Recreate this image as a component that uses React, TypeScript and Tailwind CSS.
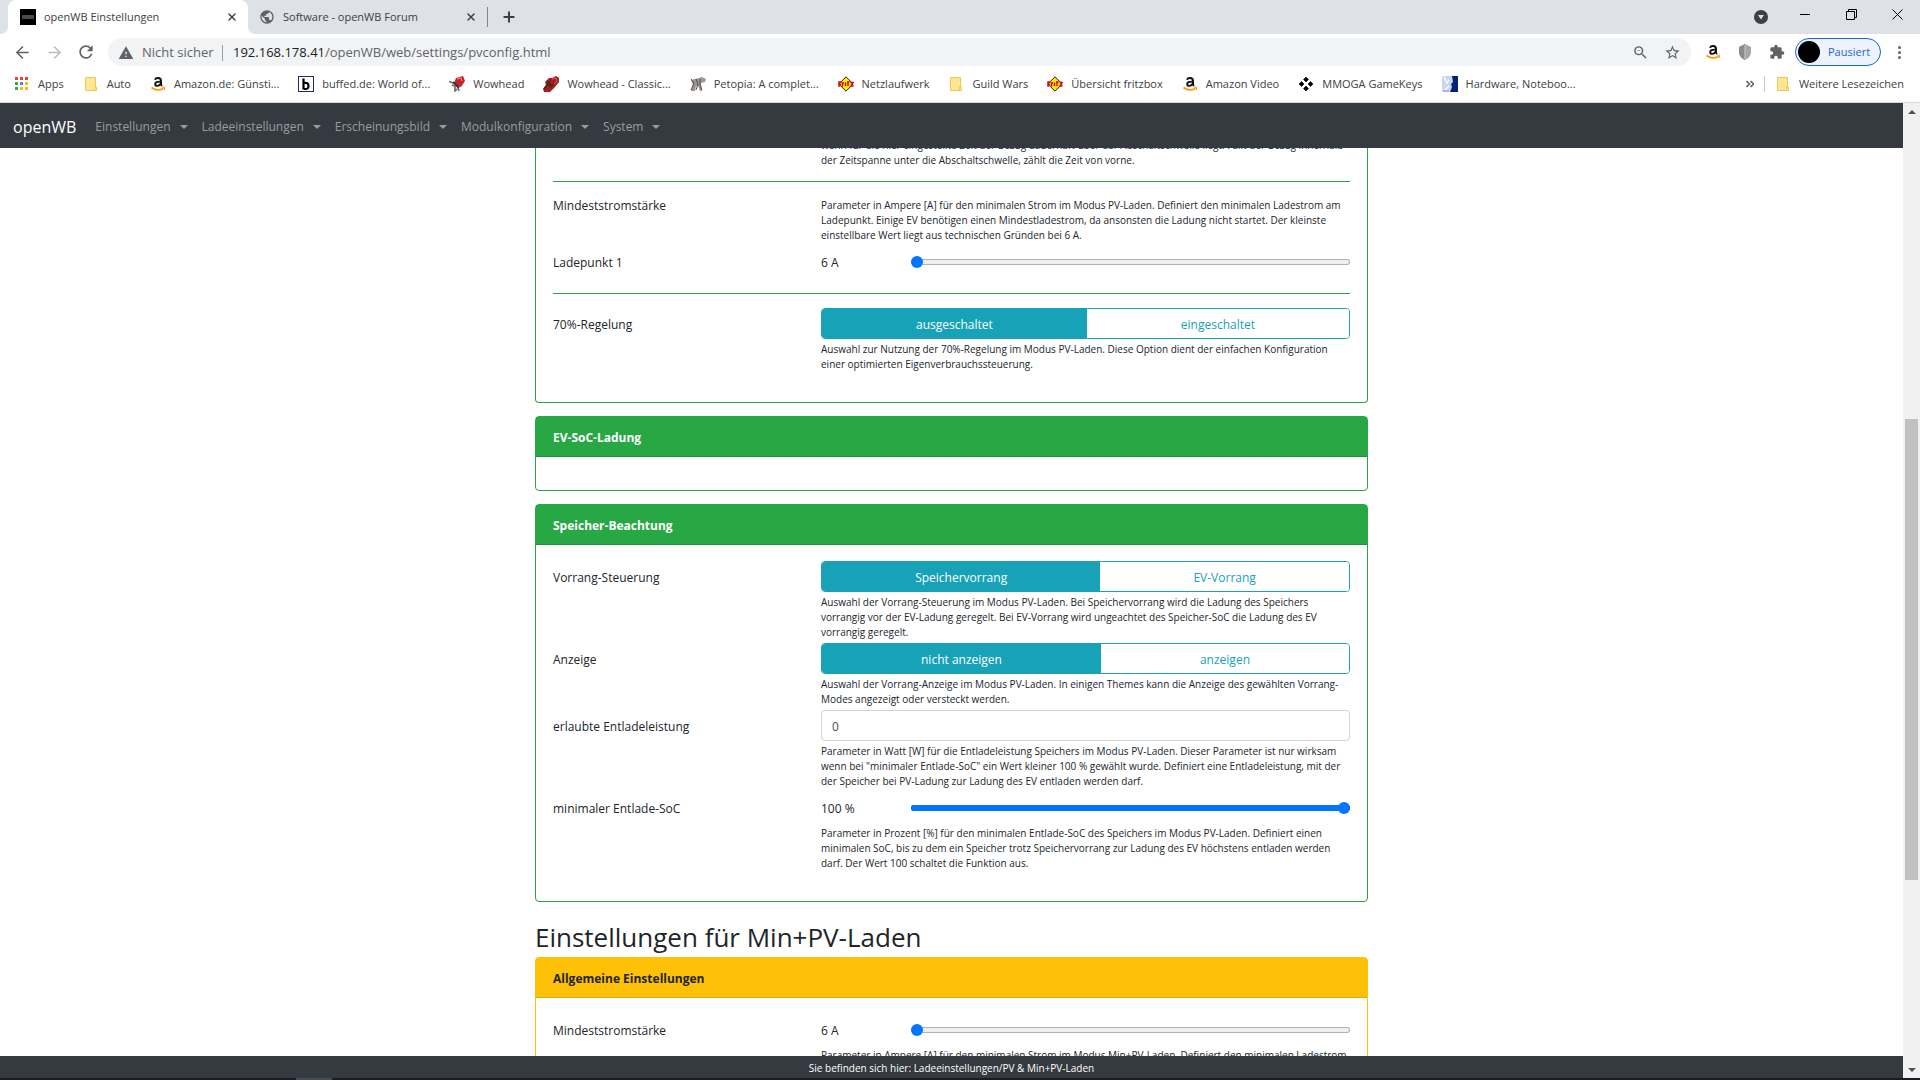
import { useState } from 'react'
import type { ReactNode } from 'react'
import { ArrowLeft, ArrowRight, Plus, X } from 'lucide-react'
import { MdExtension, MdPublic, MdRefresh, MdStarBorder, MdWarning, MdZoomOut } from 'react-icons/md'

function FolderIcon() {
  return (
    <svg width="16" height="16" viewBox="0 0 16 16">
      <path d="M2.5 1.5h10v9.500h1v3.500h-11z" fill="#ffe694" stroke="#ecc94e" />
      <path d="M11.500 14.500v-3.500h1" fill="none" stroke="#ecc94e" />
    </svg>
  )
}

function AppsIcon() {
  const colors = ['#ea4335', '#ea4335', '#ea4335', '#34a853', '#4285f4', '#fbbc04', '#34a853', '#fbbc04', '#fbbc04']
  return (
    <svg width="16" height="16" viewBox="0 0 16 16">
      {colors.map((c, i) => (
        <rect key={i} x={1 + (i % 3) * 5} y={1 + Math.floor(i / 3) * 5} width="3" height="3" fill={c} />
      ))}
    </svg>
  )
}

function AmazonIcon() {
  return (
    <svg width="16" height="16" viewBox="0 0 16 16">
      <path d="M5 3.800Q5.600 2 8 2q3 0 3 2.800v3.200q0 1 .9 2" fill="none" stroke="#111" strokeWidth="2" />
      <path d="M10.500 5.600Q5.200 5.400 5.200 8q0 1.900 2 1.900 2.400 0 3.300-2.400" fill="none" stroke="#111" strokeWidth="1.900" />
      <path d="M1.500 11.500Q7.500 16 13.500 12.200" fill="none" stroke="#f90" strokeWidth="1.700" />
      <path d="M12 11.200l2.800-.2-.5 3" fill="none" stroke="#f90" />
    </svg>
  )
}

function BuffedIcon() {
  return (
    <svg width="16" height="16" viewBox="0 0 16 16">
      <rect x=".5" y=".5" width="15" height="15" fill="#fff" stroke="#1d2a6b" />
      <path d="M5.500 2.500v11M6 7q4.500-1 4.500 3T6 12.700" fill="none" stroke="#000" strokeWidth="2.200" />
    </svg>
  )
}

function WowheadIcon() {
  return (
    <svg width="16" height="16" viewBox="0 0 16 16">
      <path d="M0 5.500l4 1.500M3 9l3 1v5l2-2M9 12l1 3" fill="none" stroke="#6b6b6b" strokeWidth="1.600" />
      <path d="M7 2l7-2 2 5-4 6-4-1-3-3z" fill="#c8202c" />
      <path d="M8 3l4-1 1 3" fill="none" stroke="#f19a9a" />
      <path d="M4 6l6 6" stroke="#3a3030" strokeWidth="2" />
    </svg>
  )
}

function WowheadClassicIcon() {
  return (
    <svg width="16" height="16" viewBox="0 0 16 16">
      <path d="M6 2l3 0 4-2 3 2v4l-4 5-5 5H1l-1-3 3-4-1-3z" fill="#a51d20" />
      <path d="M1 13l4-5 4 3M4 5l3 3 4 1" fill="none" stroke="#4d2a14" strokeWidth="1.800" />
      <path d="M9 3l4-1 1 3-3 3" fill="none" stroke="#e8585a" />
    </svg>
  )
}

function PetopiaIcon() {
  return (
    <svg width="16" height="16" viewBox="0 0 16 16">
      <path d="M1 4l4-1 4-1 3-1 4 2-1 3-4 1 0 3 1 5-2 0-2-5-2 0-1 5-4 0 2-6z" fill="#9a9694" />
      <path d="M1 3l3 4-3 7M6 3l2 5-2 6M10 3l0 5 2 6" fill="none" stroke="#57504e" />
    </svg>
  )
}

function FritzIcon() {
  return (
    <svg width="16" height="16" viewBox="0 0 16 16">
      <path d="M8 .8L15.200 8 8 15.200.8 8z" fill="#ffe600" stroke="#222" />
      <path
        d="M1 11V6h2.500M1 8.500h2M4.500 10.500V7h1.500M7.500 6.500V10M9 6h2.500M10 5.500V10M12.500 6.500h2.500l-2 3.500h2.500"
        fill="none"
        stroke="#d4001f"
        strokeWidth="1.400"
      />
    </svg>
  )
}

function MmogaIcon() {
  return (
    <svg width="16" height="16" viewBox="0 0 16 16">
      <path
        d="M8 1l2.500 2.500L8 6 5.500 3.500zM8 10l2.500 2.500L8 15l-2.500-2.500zM3.500 5.500L6 8l-2.500 2.500L1 8zM12.500 5.500L15 8l-2.500 2.500L10 8z"
        fill="#000"
        stroke="#000"
        strokeWidth=".6"
      />
    </svg>
  )
}

function HardwareIcon() {
  return (
    <svg width="16" height="16" viewBox="0 0 16 16">
      <rect width="16" height="16" fill="#c9d6ec" />
      <path d="M10 0h6v16H8l2-5-1-3 2-2z" fill="#03207a" />
      <path d="M2 1l3 6 2-3M3 14l4-4" fill="none" stroke="#fff" strokeWidth="1.200" />
      <path d="M1 15h6" stroke="#8a9abb" />
    </svg>
  )
}

const bookmarks: { label: string; icon: ReactNode }[] = [
  { label: 'Apps', icon: <AppsIcon /> },
  { label: 'Auto', icon: <FolderIcon /> },
  { label: 'Amazon.de: Günsti...', icon: <AmazonIcon /> },
  { label: 'buffed.de: World of...', icon: <BuffedIcon /> },
  { label: 'Wowhead', icon: <WowheadIcon /> },
  { label: 'Wowhead - Classic...', icon: <WowheadClassicIcon /> },
  { label: 'Petopia: A complet...', icon: <PetopiaIcon /> },
  { label: 'Netzlaufwerk', icon: <FritzIcon /> },
  { label: 'Guild Wars', icon: <FolderIcon /> },
  { label: 'Übersicht fritzbox', icon: <FritzIcon /> },
  { label: 'Amazon Video', icon: <AmazonIcon /> },
  { label: 'MMOGA GameKeys', icon: <MmogaIcon /> },
  { label: 'Hardware, Noteboo...', icon: <HardwareIcon /> },
]

function TabBar() {
  return (
    <div className="flex h-[34px] shrink-0 items-stretch bg-[#dee1e6] text-[11px] text-[#3c4043]">
      <svg className="self-end" width="8" height="8" viewBox="0 0 8 8">
        <path d="M8 0v8H0q8 0 8-8z" fill="#fff" />
      </svg>
      <div className="flex w-60 items-center rounded-t-lg bg-white pr-2 pl-3">
        <span className="flex h-4 w-4 items-center justify-center bg-black">
          <span className="h-1 w-3 bg-[#4a4a4a]" />
        </span>
        <span className="ml-2 flex-1">openWB Einstellungen</span>
        <button type="button" aria-label="Tab schließen" className="flex h-4 w-4 items-center justify-center">
          <X size={12} strokeWidth={3} />
        </button>
      </div>
      <svg className="self-end" width="8" height="8" viewBox="0 0 8 8">
        <path d="M0 0v8h8Q0 8 0 0z" fill="#fff" />
      </svg>
      <div className="flex w-[231px] items-center pr-2 pl-[3px]">
        <MdPublic size={16} className="text-[#5f6368]" />
        <span className="ml-2 flex-1">Software - openWB Forum</span>
        <button type="button" aria-label="Tab schließen" className="flex h-4 w-4 items-center justify-center">
          <X size={12} strokeWidth={3} />
        </button>
      </div>
      <span className="my-[7px] w-px bg-[#808387]" />
      <button type="button" aria-label="Neuer Tab" className="ml-[13px]">
        <Plus size={16} strokeWidth={3} />
      </button>
      <div className="ml-auto flex items-center text-black">
        <button type="button" aria-label="Tabs durchsuchen" className="mr-[14px]">
          <svg width="14" height="14" viewBox="0 0 14 14">
            <circle cx="7" cy="7" r="7" fill="#3c4043" />
            <path d="M4 5h6l-3 4.500z" fill="#dee1e6" />
          </svg>
        </button>
        <button type="button" aria-label="Minimieren" className="flex w-[46px] justify-center pb-1.5">
          <svg width="11" height="11" viewBox="0 0 11 11">
            <path d="M0 5.500h10" stroke="currentColor" />
          </svg>
        </button>
        <button type="button" aria-label="Verkleinern" className="flex w-[46px] justify-center pb-1.5">
          <svg width="11" height="11" viewBox="0 0 11 11" fill="none" stroke="currentColor">
            <path d="M.5 2.500h8v8h-8zM2.500 2.500v-2h8v8h-2" />
          </svg>
        </button>
        <button type="button" aria-label="Schließen" className="flex w-[46px] justify-center pb-1.5">
          <svg width="11" height="11" viewBox="0 0 11 11" stroke="currentColor">
            <path d="M.5.5l10 10M10.500.5l-10 10" />
          </svg>
        </button>
      </div>
    </div>
  )
}

function AddressBar() {
  return (
    <div className="flex h-9 shrink-0 items-center bg-white text-[#5f6368]">
      <button type="button" aria-label="Zurück" className="ml-[13px]">
        <ArrowLeft size={19} strokeWidth={2} />
      </button>
      <button type="button" aria-label="Vorwärts" className="ml-[13px] text-[#babcbe]">
        <ArrowRight size={19} strokeWidth={2} />
      </button>
      <button type="button" aria-label="Neu laden" className="ml-3">
        <MdRefresh size={20} />
      </button>
      <div className="ml-3 flex h-7 flex-1 items-center rounded-full bg-[#f1f3f4] px-2.5 pt-px text-[13px]">
        <MdWarning size={16} />
        <span className="ml-2 w-20">Nicht sicher</span>
        <span className="h-4 w-px bg-[#9aa0a6]" />
        <div role="textbox" aria-label="Adresse" className="ml-2.5 flex-1">
          <span className="text-[#202124]">192.168.178.41</span>/openWB/web/settings/pvconfig.html
        </div>
        <button type="button" aria-label="Zoom">
          <MdZoomOut size={17} />
        </button>
        <button type="button" aria-label="Lesezeichen setzen" className="ml-[15px]">
          <MdStarBorder size={17} />
        </button>
      </div>
      <div className="ml-[14px]">
        <AmazonIcon />
      </div>
      <svg className="ml-4" width="16" height="16" viewBox="0 0 16 16">
        <path d="M8 0l6 3v6q-1 5-6 7-5-2-6-7V3z" fill="#a5a5a5" />
        <path d="M8 0v16q-5-2-6-7V3z" fill="#8b8b8b" />
        <path d="M8 1v14" stroke="#c9c9c9" />
      </svg>
      <button type="button" aria-label="Erweiterungen" className="ml-4">
        <MdExtension size={16} />
      </button>
      <button
        type="button"
        className="ml-2.5 flex h-7 w-[86px] items-center rounded-full border border-[#1967d2] bg-[#edf2fc] pl-[2px] text-[11px] text-[#1967d2]"
      >
        <span className="h-[22px] w-[22px] rounded-full bg-black" />
        <span className="ml-2">Pausiert</span>
      </button>
      <button type="button" aria-label="Menü" className="mr-[15px] ml-3 flex w-3 flex-col items-center gap-[2px]">
        <span className="h-[3px] w-[3px] rounded-full bg-[#5f6368]" />
        <span className="h-[3px] w-[3px] rounded-full bg-[#5f6368]" />
        <span className="h-[3px] w-[3px] rounded-full bg-[#5f6368]" />
      </button>
    </div>
  )
}

function BookmarkBar() {
  return (
    <div className="flex h-[33px] shrink-0 items-center border-b border-[#d5d7da] bg-white pr-4 pb-1 pl-[14px] text-[11px] text-[#3c4043]">
      <div className="flex items-center gap-[19px]">
        {bookmarks.map((b) => (
          <a key={b.label} href="#" className="flex items-center gap-2 whitespace-nowrap">
            {b.icon}
            {b.label}
          </a>
        ))}
      </div>
      <button type="button" aria-label="Weitere anzeigen" className="ml-auto">
        <svg width="8" height="8" viewBox="0 0 8 8" fill="none" stroke="#5f6368" strokeWidth="1.600">
          <path d="M.5 1l3 3-3 3M4.500 1l3 3-3 3" />
        </svg>
      </button>
      <span className="mr-2.5 ml-2.5 h-4 w-px bg-[#c8cacd]" />
      <a href="#" className="flex items-center gap-2">
        <FolderIcon />
        Weitere Lesezeichen
      </a>
    </div>
  )
}

const menus = ['Einstellungen', 'Ladeeinstellungen', 'Erscheinungsbild', 'Modulkonfiguration', 'System']

function NavBar() {
  return (
    <nav className="flex h-[45px] shrink-0 items-center bg-[#343a40] px-[13px] pt-[2px]">
      <a href="#" className="mr-[19px] text-[16px] text-white">
        openWB
      </a>
      <div className="flex gap-[14px]">
        {menus.map((m) => (
          <button key={m} type="button" className="flex items-center gap-[9px] text-[12px] text-[#999c9f]">
            {m}
            <span className="border-x-4 border-t-4 border-x-transparent border-t-[#999c9f]" />
          </button>
        ))}
      </div>
    </nav>
  )
}

function Card({ title, color, children }: { title: string; color: 'success' | 'warning'; children?: ReactNode }) {
  const success = color === 'success'
  return (
    <section className={`mb-[13px] rounded border ${success ? 'border-[#28a745]' : 'border-[#ffc107]'}`}>
      <h2
        className={`flex h-10 items-center border-b px-[17px] pt-[2px] text-[12px] font-bold ${
          success ? 'border-[#24903d] bg-[#28a745] text-white' : 'border-[#dfaa0b] bg-[#ffc107] text-[#212529]'
        }`}
      >
        {title}
      </h2>
      {children}
    </section>
  )
}

function Row({ label, children }: { label: string; children: ReactNode }) {
  return (
    <div className="flex">
      <div className="w-[268px] shrink-0 pt-2 leading-[17px]">{label}</div>
      <div className="min-w-0 flex-1">{children}</div>
    </div>
  )
}

function Help({ children }: { children: ReactNode }) {
  return <p className="mt-[3px] text-[10px] leading-[15px]">{children}</p>
}

function Choice({ name, options }: { name: string; options: string[] }) {
  const [selected, setSelected] = useState(options[0])
  return (
    <div role="radiogroup" aria-label={name} className="flex h-[31px] overflow-hidden rounded border border-[#17a2b8]">
      {options.map((o) => (
        <label
          key={o}
          className={`flex flex-auto cursor-pointer items-center justify-center pt-[2px] ${
            selected === o ? 'bg-[#17a2b8] text-white' : 'bg-white text-[#17a2b8]'
          }`}
        >
          <input type="radio" name={name} checked={selected === o} onChange={() => setSelected(o)} className="sr-only" />
          {o}
        </label>
      ))}
    </div>
  )
}

type RangeProps = { name: string; unit: string; min: number; max: number; initial: number }

function Range({ name, unit, min, max, initial }: RangeProps) {
  const [value, setValue] = useState(initial)
  const fill = ((value - min) / (max - min)) * 100
  return (
    <div className="flex h-[31px] items-center">
      <span className="w-[90px] shrink-0 pt-[2px]">
        {value} {unit}
      </span>
      <input
        type="range"
        aria-label={name}
        min={min}
        max={max}
        value={value}
        onChange={(e) => setValue(Number(e.target.value))}
        style={{ backgroundImage: `linear-gradient(to right, #0075ff ${fill}%, #efefef ${fill}%)` }}
        className={`h-[6px] min-w-0 flex-1 appearance-none rounded-full ring-1 ring-inset ${
          fill === 100 ? 'ring-[#0075ff]' : 'ring-[#b2b2b2]'
        } [&::-webkit-slider-thumb]:h-3 [&::-webkit-slider-thumb]:w-3 [&::-webkit-slider-thumb]:appearance-none [&::-webkit-slider-thumb]:rounded-full [&::-webkit-slider-thumb]:bg-[#0075ff]`}
      />
    </div>
  )
}

function Settings() {
  return (
    <main className="mx-auto w-full max-w-[833px] text-[12px] text-[#212529]">
      <section className="mb-[13px] rounded-b border border-t-0 border-[#28a745] px-[17px] pb-[30px]">
        <p className="-mt-[10px] ml-[268px] text-[10px] leading-[15px]">
          wenn für die hier eingestellte Zeit der Bezug dauerhaft über der Abschaltschwelle liegt. Fällt der Bezug innerhalb
          der Zeitspanne unter die Abschaltschwelle, zählt die Zeit von vorne.
        </p>
        <hr className="mt-[13px] mb-4 border-[#28a745]" />
        <div className="flex leading-[15px]">
          <div className="w-[268px] shrink-0">Mindeststromstärke</div>
          <p className="flex-1 text-[10px]">
            Parameter in Ampere [A] für den minimalen Strom im Modus PV-Laden. Definiert den minimalen Ladestrom am
            Ladepunkt. Einige EV benötigen einen Mindestladestrom, da ansonsten die Ladung nicht startet. Der kleinste
            einstellbare Wert liegt aus technischen Gründen bei 6 A.
          </p>
        </div>
        <div className="mt-[3px]">
          <Row label="Ladepunkt 1">
            <Range name="Ladepunkt 1" unit="A" min={6} max={16} initial={6} />
          </Row>
        </div>
        <hr className="mt-4 mb-[14px] border-[#28a745]" />
        <Row label="70%-Regelung">
          <Choice name="70%-Regelung" options={['ausgeschaltet', 'eingeschaltet']} />
          <Help>
            Auswahl zur Nutzung der 70%-Regelung im Modus PV-Laden. Diese Option dient der einfachen Konfiguration
            <br />
            einer optimierten Eigenverbrauchssteuerung.
          </Help>
        </Row>
      </section>

      <Card title="EV-SoC-Ladung" color="success">
        <div className="h-[33px]" />
      </Card>

      <Card title="Speicher-Beachtung" color="success">
        <div className="flex flex-col gap-[3px] px-[17px] pt-4 pb-[30px]">
          <Row label="Vorrang-Steuerung">
            <Choice name="Vorrang-Steuerung" options={['Speichervorrang', 'EV-Vorrang']} />
            <Help>
              Auswahl der Vorrang-Steuerung im Modus PV-Laden. Bei Speichervorrang wird die Ladung des Speichers
              <br />
              vorrangig vor der EV-Ladung geregelt. Bei EV-Vorrang wird ungeachtet des Speicher-SoC die Ladung des EV
              <br />
              vorrangig geregelt.
            </Help>
          </Row>
          <Row label="Anzeige">
            <Choice name="Anzeige" options={['nicht anzeigen', 'anzeigen']} />
            <Help>
              Auswahl der Vorrang-Anzeige im Modus PV-Laden. In einigen Themes kann die Anzeige des gewählten
              Vorrang-Modes angezeigt oder versteckt werden.
            </Help>
          </Row>
          <Row label="erlaubte Entladeleistung">
            <input
              type="text"
              aria-label="erlaubte Entladeleistung"
              defaultValue="0"
              className="block h-[31px] w-full rounded border border-[#ced4da] px-2.5 pt-[2px] text-[#495057]"
            />
            <Help>
              Parameter in Watt [W] für die Entladeleistung Speichers im Modus PV-Laden. Dieser Parameter ist nur wirksam
              wenn bei "minimaler Entlade-SoC" ein Wert kleiner 100 % gewählt wurde. Definiert eine Entladeleistung, mit
              der der Speicher bei PV-Ladung zur Ladung des EV entladen werden darf.
            </Help>
          </Row>
          <Row label="minimaler Entlade-SoC">
            <Range name="minimaler Entlade-SoC" unit="%" min={0} max={100} initial={100} />
            <Help>
              Parameter in Prozent [%] für den minimalen Entlade-SoC des Speichers im Modus PV-Laden. Definiert einen
              minimalen SoC, bis zu dem ein Speicher trotz Speichervorrang zur Ladung des EV höchstens entladen werden
              darf. Der Wert 100 schaltet die Funktion aus.
            </Help>
          </Row>
        </div>
      </Card>

      <h1 className="mb-1 pt-[7px] text-[26px] leading-[31px] font-medium">Einstellungen für Min+PV-Laden</h1>

      <Card title="Allgemeine Einstellungen" color="warning">
        <div className="px-[17px] py-4">
          <Row label="Mindeststromstärke">
            <Range name="Mindeststromstärke" unit="A" min={6} max={16} initial={6} />
            <Help>
              Parameter in Ampere [A] für den minimalen Strom im Modus Min+PV-Laden. Definiert den minimalen Ladestrom
            </Help>
          </Row>
        </div>
      </Card>
    </main>
  )
}

function ScrollBar() {
  return (
    <div className="flex w-[17px] shrink-0 flex-col items-center bg-[#f1f1f1]">
      <div className="flex h-[17px] items-center">
        <span className="border-x-4 border-b-4 border-x-transparent border-b-[#505050]" />
      </div>
      <div className="flex-[299]" />
      <div className="w-[13px] flex-[461] bg-[#c1c1c1]" />
      <div className="flex-[181]" />
      <div className="flex h-[17px] items-center">
        <span className="border-x-4 border-t-4 border-x-transparent border-t-[#505050]" />
      </div>
    </div>
  )
}

export default function App() {
  return (
    <div className="flex h-screen flex-col overflow-hidden bg-white font-['Open_Sans','Noto_Sans',sans-serif]">
      <TabBar />
      <AddressBar />
      <BookmarkBar />
      <div className="flex min-h-0 flex-1">
        <div className="flex min-w-0 flex-1 flex-col">
          <NavBar />
          <div className="min-h-0 flex-1 overflow-hidden">
            <Settings />
          </div>
          <footer className="h-[22px] shrink-0 bg-[#343a40] pt-1 text-center text-[10px] leading-[17px] text-white">
            Sie befinden sich hier: Ladeeinstellungen/PV &amp; Min+PV-Laden
          </footer>
        </div>
        <ScrollBar />
      </div>
      <div className="flex h-[2px] shrink-0 bg-[#1b1c20]">
        <span className="ml-[296px] w-9 bg-[#4b4b4e]" />
      </div>
    </div>
  )
}
